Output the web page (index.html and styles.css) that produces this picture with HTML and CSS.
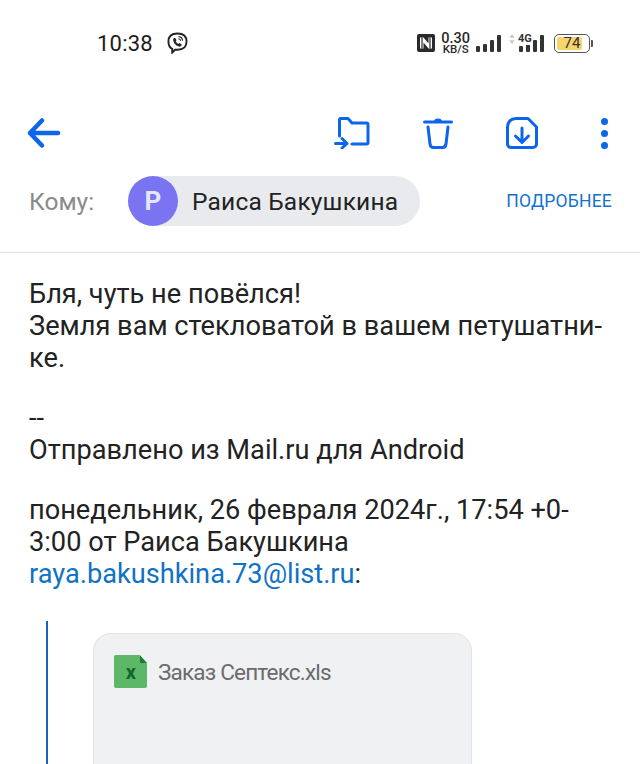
FILE: index.html
```html
<!doctype html>
<html>
  <head>
    <meta charset="utf-8" />
    <title>Письмо</title>
    <link rel="stylesheet" href="styles.css">
  </head>
  <body>
    <div class="status-bar">
      <div class="status-left">
        <span class="clock">10:38</span>
        <svg class="viber" width="21" height="22" viewBox="0 0 22 23" fill="none" stroke="#222" stroke-width="2">
          <path d="M11 1.500c5.500 0 9.500 1.800 9.500 8.500s-4 8.500-9.500 8.500c-.8 0-1.500 0-2.200-.1L5.500 21.500v-3.800C2.500 16.300 1.500 13.700 1.500 10 1.500 3.300 5.500 1.500 11 1.500z"/>
          <path d="M7 6.500l1.500-.5 1.500 2.500-1 1.200c.6 1.300 1.500 2.200 2.800 2.800l1.200-1 2.500 1.500-.5 1.500c-.5 1-1.800 1-3 .5-3-1.200-5-3.200-5.500-6.500-.1-1 .1-1.600.5-2z" fill="#222" stroke="none"/>
          <path d="M12 4.800c2.500.2 4.200 1.900 4.400 4.400M12 7c1.300.2 2.100 1 2.300 2.300" stroke-width="1.100"/>
        </svg>
      </div>
      <div class="status-right">
        <svg width="20" height="20" viewBox="0 0 20 20">
          <rect x="1" y="1" width="18" height="18" rx="2" fill="#2a2a2a"/>
          <path d="M4 4.500h3.500l5 6V4.500H16v11h-3.500l-5-6v6H4z" fill="#fff"/>
          <path d="M6 4.500v11M14 4.500v11" stroke="#2a2a2a" stroke-width="1.200"/>
        </svg>
        <div class="speed"><b>0.30</b><span>KB/S</span></div>
        <div class="bars wifi-gap">
          <i class="h1"></i><i class="h2"></i><i class="h3"></i><i class="h4"></i>
        </div>
        <div class="net">
          <svg class="updown" width="6" height="10" viewBox="0 0 6 11" fill="#c8c8c8">
            <path d="M3 0l3 4H0zM3 11L0 7h6z"/>
          </svg>
          <span class="net-label">4G</span>
          <div class="bars">
            <i class="h1"></i><i class="h2"></i><i class="h3"></i><i class="h4"></i>
          </div>
        </div>
        <div class="battery"><div class="battery-level"></div><span>74</span></div>
        <div class="battery-tip"></div>
      </div>
    </div>

    <div class="toolbar">
      <svg class="back" width="36" height="34" viewBox="0 0 36 34" fill="none" stroke="#0d65ec" stroke-width="4.500" stroke-linecap="round" stroke-linejoin="round">
        <path d="M4 17h28M16 4.500L4 17l12 12.500"/>
      </svg>
      <div class="actions">
        <svg width="36" height="32" viewBox="0 0 36 32" fill="none" stroke="#0d65ec" stroke-width="3" stroke-linecap="round" stroke-linejoin="round">
          <path d="M5.500 19V3c0-1 .5-1.500 1.500-1.500h7l4 4.500h14.500c1 0 1.500.5 1.500 1.500V25.500c0 1-.5 1.500-1.500 1.500H18"/>
          <path d="M1.500 26.500H13M8 21.500l5 5-5 4.500"/>
        </svg>
        <svg width="30" height="32" viewBox="0 0 30 32" fill="none" stroke="#0d65ec" stroke-width="3" stroke-linecap="round" stroke-linejoin="round">
          <path d="M1.500 5h27M5 10l2 17c.2 2 1.500 3.500 3.500 3.500h9c2 0 3.300-1.500 3.500-3.500l2-17"/>
          <path d="M11 5c0-2.500 1.500-3.500 4-3.500s4 1 4 3.500z" fill="#0d65ec" stroke="none"/>
        </svg>
        <svg width="32" height="32" viewBox="0 0 32 32" fill="none" stroke="#0d65ec" stroke-width="3" stroke-linecap="round" stroke-linejoin="round">
          <path d="M10 1.500h12L30.500 10v17c0 2-1.500 3.500-3.500 3.500H5c-2 0-3.500-1.500-3.500-3.500V10C1.500 5 5 1.500 10 1.500z"/>
          <path d="M16 11v14M9.500 19l6.500 6.500 6.500-6.500"/>
        </svg>
        <div class="dots"><i></i><i></i><i></i></div>
      </div>
    </div>

    <div class="recipient">
      <span class="to-label">Кому:</span>
      <div class="chip">
        <span class="avatar">Р</span>
        <span class="chip-name">Раиса Бакушкина</span>
      </div>
      <a class="more">ПОДРОБНЕЕ</a>
    </div>

    <div class="message">
      <p>Бля, чуть не повёлся!<br>Земля вам стекловатой в вашем петушатни-<br>ке.</p>
      <p class="signature">--<br>Отправлено из Mail.ru для Android</p>
      <p>понедельник, 26 февраля 2024г., 17:54 +0-<br>3:00 от Раиса Бакушкина<br><a class="mail">raya.bakushkina.73@list.ru</a>:</p>
    </div>

    <div class="quote">
      <div class="attachment">
        <div class="attachment-title">
          <div class="xls-icon">x</div>
          <span>Заказ Септекс.xls</span>
        </div>
      </div>
    </div>
  </body>
</html>
```

FILE: styles.css
```css
html,
body {
  margin: 0;
  height: 764px;
  overflow: hidden;
  background: #fff;
}
body {
  font-family: Roboto, "Noto Sans", sans-serif;
  color: #222;
}
p {
  margin: 0;
}
.status-bar {
  height: 86px;
  display: flex;
  justify-content: space-between;
  align-items: center;
  padding-left: 97px;
  padding-right: 47px;
  box-sizing: border-box;
}
.status-left {
  display: flex;
  align-items: center;
  gap: 14px;
}
.clock {
  font-size: 22px;
  letter-spacing: 0.2px;
  color: #1c1c1c;
}
.status-right {
  display: flex;
  align-items: center;
}
.speed {
  display: flex;
  flex-direction: column;
  align-items: center;
  margin-left: 5px;
  color: #2a2a2a;
}
.speed b {
  font-size: 14.500px;
  line-height: 11px;
  font-weight: 500;
}
.speed span {
  font-size: 11.500px;
  line-height: 10px;
  font-weight: 500;
}
.bars {
  display: flex;
  align-items: flex-end;
  gap: 3px;
  height: 17px;
}
.bars i {
  display: block;
  width: 4px;
  background: #333;
  border-radius: 1px;
}
.bars .h1 { height: 6px; }
.bars .h2 { height: 8px; }
.bars .h3 { height: 12px; }
.bars .h4 { height: 17px; }
.wifi-gap {
  margin-left: 6px;
}
.net {
  position: relative;
  margin-left: 18px;
}
.updown {
  position: absolute;
  left: -10px;
  top: -1px;
}
.net-label {
  position: absolute;
  left: -1px;
  top: -2px;
  font-size: 11px;
  line-height: 12px;
  font-weight: 700;
  background: #fff;
  color: #333;
}
.battery {
  position: relative;
  width: 34px;
  height: 17px;
  margin-left: 10px;
  border: 1.500px solid #555;
  border-radius: 5px;
  display: flex;
  align-items: center;
  justify-content: center;
}
.battery-level {
  position: absolute;
  left: 2px;
  top: 2px;
  bottom: 2px;
  width: 25px;
  background: #f8d56a;
  border-radius: 2px;
}
.battery span {
  position: relative;
  font-size: 15px;
  color: #333;
}
.battery-tip {
  width: 2px;
  height: 7px;
  background: #555;
  margin-left: 1px;
  border-radius: 0 1px 1px 0;
}
.toolbar {
  height: 70px;
  display: flex;
  align-items: center;
  justify-content: space-between;
  padding-left: 26px;
  padding-right: 32px;
  margin-top: 12px;
}
.actions {
  display: flex;
  align-items: center;
  gap: 53px;
}
.dots {
  display: flex;
  flex-direction: column;
  gap: 5px;
  margin-left: 10px;
}
.dots i {
  display: block;
  width: 7px;
  height: 7px;
  border-radius: 50%;
  background: #0d65ec;
}
.recipient {
  display: flex;
  align-items: center;
  height: 50px;
  margin-top: 8px;
  padding: 0 28px 26px 29px;
  border-bottom: 1px solid #e3e3e5;
}
.to-label {
  font-size: 24.500px;
  color: #8a8a8a;
  width: 99px;
}
.chip {
  display: flex;
  align-items: center;
  height: 50px;
  width: 292px;
  border-radius: 25px;
  background: #e9eaed;
}
.avatar {
  width: 50px;
  height: 50px;
  border-radius: 50%;
  background: #7a74f2;
  color: #e6e6fb;
  font-size: 26px;
  font-weight: 700;
  display: flex;
  align-items: center;
  justify-content: center;
}
.chip-name {
  margin-left: 14px;
  font-size: 24.500px;
  letter-spacing: 0.2px;
  color: #222;
}
.more {
  margin-left: auto;
  font-size: 17.500px;
  letter-spacing: 0.2px;
  color: #1372d0;
}
.message {
  padding: 25px 20px 0 29px;
  font-size: 27.200px;
  line-height: 32px;
  color: #222;
}
.signature {
  margin-top: 28px;
  margin-bottom: 28px;
}
.mail {
  color: #0f72c4;
}
.quote {
  margin: 31px 0 0 46px;
  height: 132px;
  border-left: 2px solid #1c62b8;
  padding: 12px 0 0 45px;
}
.attachment {
  box-sizing: border-box;
  width: 379px;
  height: 132px;
  background: #f0f1f3;
  border: 1px solid #e2e3e6;
  border-bottom: none;
  border-radius: 18px 18px 0 0;
}
.attachment-title {
  display: flex;
  align-items: center;
  gap: 11px;
  padding: 21px 0 0 20px;
  font-size: 22.500px;
  letter-spacing: -0.8px;
  color: #6b6b6e;
}
.xls-icon {
  position: relative;
  width: 33px;
  height: 33px;
  background: #5cb868;
  border-radius: 2px;
  color: #17662c;
  font-size: 20px;
  font-weight: 700;
  display: flex;
  align-items: center;
  justify-content: center;
  clip-path: polygon(0 0, 78% 0, 100% 24%, 100% 100%, 0 100%);
}
.xls-icon::after {
  content: "";
  position: absolute;
  right: 0;
  top: 0;
  width: 7px;
  height: 8px;
  background: #1f7a3a;
  clip-path: polygon(0 0, 100% 100%, 0 100%);
}
```
